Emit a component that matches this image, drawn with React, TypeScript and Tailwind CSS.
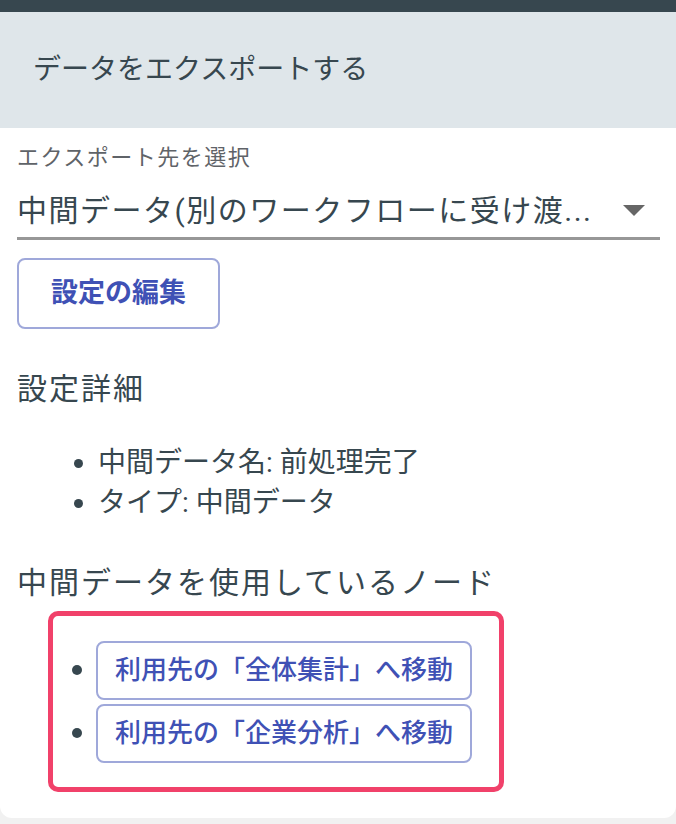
export default function App() {
  const font = { fontFamily: '"Roboto", "Noto Sans CJK JP", sans-serif' }
  return (
    <div className="w-[676px] h-[824px] bg-[#f1f1f1] overflow-hidden" style={font}>
      <div className="h-[818px] bg-white rounded-b-[12px] flex flex-col">
        <div className="h-[12px] bg-[#37474f]" />
        <div className="h-[116px] bg-[#dfe6ea] flex items-center px-[33px]">
          <h2 className="text-[28px] leading-none text-[#37474f]">データをエクスポートする</h2>
        </div>

        <div className="pl-[17px] pr-[16px]">
          <div className="mt-[18px] text-[22px] leading-[24px] tracking-[1.5px] text-[#5f6368]">
            エクスポート先を選択
          </div>
          <div className="h-[70px] pt-[14px] flex items-center justify-between border-b-[3px] border-[#979797]">
            <span className="text-[30px] leading-none text-[#37474f] tracking-[1.5px]">
              中間データ(別のワークフローに受け渡...
            </span>
            <svg width="22" height="11" viewBox="0 0 22 11" className="mr-[15px]">
              <path d="M0 0 L22 0 L11 11 Z" fill="#666" />
            </svg>
          </div>

          <button className="mt-[18px] w-[203px] h-[71px] rounded-[8px] border-2 border-[#9fa8da] text-[27px] font-semibold text-[#3f51b5]">
            設定の編集
          </button>

          <h3 className="mt-[43px] text-[30px] leading-[34px] tracking-[2px] text-[#37474f]">設定詳細</h3>

          <ul className="mt-[37px] pl-[57px] text-[28px] leading-[40px] text-[#37474f] flex flex-col">
            <li className="flex items-center gap-[15px]">
              <span className="w-[9px] h-[9px] rounded-full bg-[#37474f]" />
              中間データ名: 前処理完了
            </li>
            <li className="flex items-center gap-[15px]">
              <span className="w-[9px] h-[9px] rounded-full bg-[#37474f]" />
              タイプ: 中間データ
            </li>
          </ul>

          <h3 className="mt-[42px] text-[30px] leading-[36px] tracking-[2px] text-[#37474f]">
            中間データを使用しているノード
          </h3>

          <div className="mt-[10px] ml-[31px] w-[456px] h-[181px] border-[5px] border-[#f1416a] rounded-[10px] flex flex-col justify-center gap-[4px] pl-[19px]">
            {["利用先の「全体集計」へ移動", "利用先の「企業分析」へ移動"].map((t) => (
              <div key={t} className="flex items-center gap-[14px]">
                <span className="w-[10px] h-[10px] rounded-full bg-[#37474f]" />
                <button className="w-[376px] h-[59px] rounded-[8px] border-2 border-[#9fa8da] text-[26px] font-medium text-[#3f51b5]">
                  {t}
                </button>
              </div>
            ))}
          </div>
        </div>
      </div>
    </div>
  )
}
